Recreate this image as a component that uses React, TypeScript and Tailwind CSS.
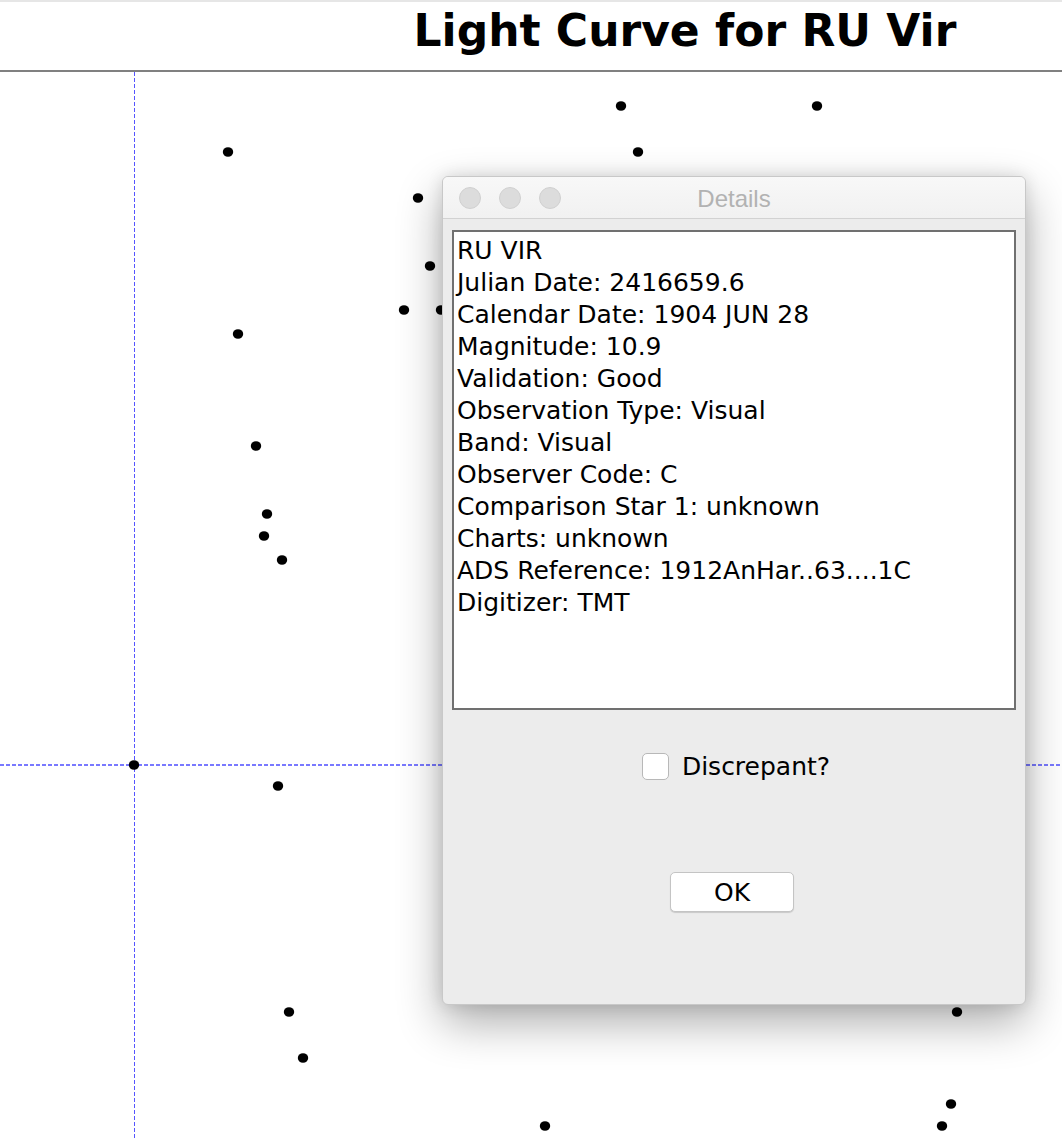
import React from 'react';

const dots: [number, number][] = [
  [621, 106], [817, 106], [228, 152], [638, 152], [418, 198], [430, 266],
  [404, 310], [441, 310], [238, 334], [256, 446], [267, 514], [264, 536],
  [282, 560], [134, 765], [278, 786], [289, 1012], [303, 1058], [957, 1012],
  [951, 1104], [942, 1126], [545, 1126],
];

const lines = [
  'RU VIR',
  'Julian Date: 2416659.6',
  'Calendar Date: 1904 JUN 28',
  'Magnitude: 10.9',
  'Validation: Good',
  'Observation Type: Visual',
  'Band: Visual',
  'Observer Code: C',
  'Comparison Star 1: unknown',
  'Charts: unknown',
  'ADS Reference: 1912AnHar..63....1C',
  'Digitizer: TMT',
];

export default function App() {
  return (
    <div className="relative w-[1062px] h-[1140px] overflow-hidden bg-white flex flex-col">
      <div className="h-[72px] shrink-0 border-t-2 border-[#e6e6e6] border-b-2 border-b-[#808080] flex items-center justify-center pl-[308px]">
        <h1 className="text-[44px] leading-none font-bold text-black -mt-[10px] [font-family:'DejaVu_Sans',sans-serif]">
          Light Curve for RU Vir
        </h1>
      </div>

      <svg className="shrink-0 block" viewBox="0 72 1062 1068" width="1062" height="1068">
        <line x1="134.5" y1="72" x2="134.5" y2="1140" stroke="#5555ff" strokeWidth="1" strokeDasharray="4 2" shapeRendering="crispEdges" />
        <line x1="0" y1="765" x2="1062" y2="765" stroke="#4d4dff" strokeWidth="1.4" strokeDasharray="4 2" />
        {dots.map(([x, y], i) => (
          <ellipse key={i} cx={x} cy={y} rx="5.2" ry="4.8" fill="#000" />
        ))}
      </svg>

      {/* Details dialog */}
      <div className="absolute left-[442px] top-[176px] w-[584px] h-[829px] rounded-[6px] bg-[#ececec] border border-[#c8c8c8] shadow-[0_18px_45px_rgba(0,0,0,0.32),0_0_16px_rgba(0,0,0,0.12)] flex flex-col overflow-hidden">
        <div className="relative h-[42px] shrink-0 bg-gradient-to-b from-[#f8f8f8] to-[#f1f1f1] border-b border-[#d2d2d2] flex items-center justify-center">
          <div className="absolute left-[16px] top-[10px] flex gap-[18px]">
            <span className="w-[22px] h-[22px] rounded-full bg-[#dcdcdc] border border-[#d0d0d0]" />
            <span className="w-[22px] h-[22px] rounded-full bg-[#dcdcdc] border border-[#d0d0d0]" />
            <span className="w-[22px] h-[22px] rounded-full bg-[#dcdcdc] border border-[#d0d0d0]" />
          </div>
          <span className="text-[24px] text-[#b2b2b2] mt-[2px] [font-family:'Liberation_Sans',Arial,sans-serif]">Details</span>
        </div>

        <div className="flex flex-col px-[9px] pt-[11px] [font-family:'DejaVu_Sans',sans-serif] text-black">
          <div className="h-[480px] bg-white border-2 border-[#707070] pl-[3px] pt-[3px]">
            {lines.map((l) => (
              <div key={l} className="text-[25px] leading-[32px] whitespace-nowrap">{l}</div>
            ))}
          </div>

          <div className="flex items-center justify-center gap-[13px] mt-[43px] pl-[4px]">
            <span className="w-[27px] h-[27px] rounded-[5px] bg-white border border-[#b8b8b8]" />
            <span className="text-[25px] leading-none">Discrepant?</span>
          </div>

          <div className="flex justify-center mt-[92px] pr-[4px]">
            <button className="w-[124px] h-[40px] rounded-[5px] bg-white border border-[#c4c4c4] shadow-[0_1px_1px_rgba(0,0,0,0.15)] text-[25px] leading-none">
              OK
            </button>
          </div>
        </div>
      </div>
    </div>
  );
}
